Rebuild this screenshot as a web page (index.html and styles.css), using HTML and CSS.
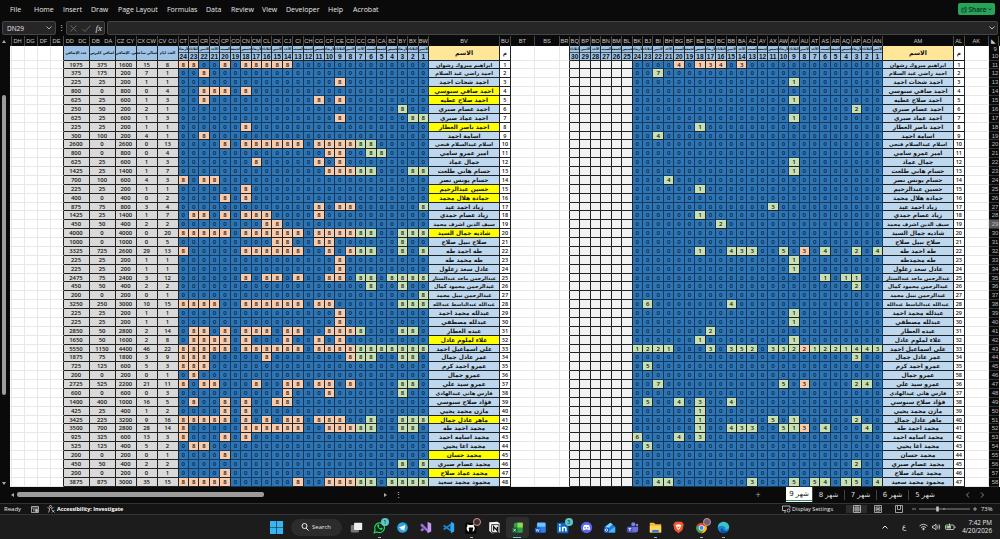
FILE: index.html
```html
<!DOCTYPE html>
<html lang="en">
  <head>
    <meta charset="UTF-8" />
    <meta name="viewport" content="width=device-width, initial-scale=1.0" />
    <title>Attendance</title>
    <link rel="stylesheet" href="styles.css">
  </head>
  <body>
    <div class="menu">
      <span>File</span><span>Home</span><span>Insert</span><span>Draw</span><span>Page Layout</span><span>Formulas</span><span>Data</span><span>Review</span><span>View</span><span>Developer</span><span>Help</span><span>Acrobat</span>
      <button class="share">
        <svg width="6" height="7" viewBox="0 0 14 14" fill="none" stroke="#0b2c18" stroke-width="1.5"><path d="M6 4H2v9h10V9M5 9c0-4 2-5 5-5V1l4 4-4 4V6"/></svg>
        Share
        <svg width="4" height="3" viewBox="0 0 8 6" fill="none" stroke="#0b2c18" stroke-width="1.5"><path d="M1 1l3 3 3-3"/></svg>
      </button>
    </div>

    <div class="formula">
      <div class="namebox">DN29
        <svg width="6" height="4" viewBox="0 0 12 8" fill="none" stroke="#aaa" stroke-width="2"><path d="M1 1l5 5 5-5"/></svg>
      </div>
      <span class="dots">⋮</span>
      <div class="actions">
        <svg width="7" height="7" viewBox="0 0 14 14" stroke="#777" stroke-width="1.6"><path d="M1 1l12 12M13 1L1 13"/></svg>
        <svg width="9" height="7" viewBox="0 0 18 14" fill="none" stroke="#777" stroke-width="1.6"><path d="M1 8l5 5L17 1"/></svg>
        <i>fx</i>
      </div>
      <div class="input">
        <svg width="6" height="4" viewBox="0 0 12 8" fill="none" stroke="#bbb" stroke-width="2"><path d="M1 1l5 5 5-5"/></svg>
      </div>
    </div>

    <div class="main">
      <div class="vscroll"><span class="up"></span><span class="vthumb"></span><span class="down"></span></div>
      <div class="sheet" id="sheet"></div>
    </div>

    <div class="tabs">
      <span class="left"></span><div class="hthumb"></div><span class="right"></span><span class="dots">⋮</span>
      <span class="plus">+</span>
      <div class="tab active" dir="rtl">شهر 9</div>
      <div class="tab" dir="rtl">شهر 8</div>
      <div class="tab" dir="rtl">شهر 7</div>
      <div class="tab" dir="rtl">شهر 6</div>
      <div class="tab last" dir="rtl">شهر 5</div>
      <svg class="arrows" width="20" height="6" viewBox="0 0 20 6" fill="none" stroke="#888"><path d="M4 .5L1.500 3 4 5.500M16 .5L18.500 3 16 5.500"/></svg>
    </div>

    <div class="status">
      <span class="ready">Ready</span>
      <svg width="8" height="7" viewBox="0 0 16 14" fill="none" stroke="#ccc" stroke-width="1.5"><path d="M1 1h14v12H1zM1 4h14M4 7h3M4 10h3"/><circle cx="11" cy="9" r="2.500" fill="#ccc"/></svg>
      <svg class="access" width="8" height="8" viewBox="0 0 16 16" fill="none" stroke="#ddd" stroke-width="1.5"><circle cx="7" cy="3" r="2"/><path d="M1 5l4 2v3l-2 5M13 5L9 7v2M10 10l5 5M15 10l-5 5"/></svg>
      <b>Accessibility: Investigate</b>
      <svg class="display" width="9" height="8" viewBox="0 0 18 16" fill="none" stroke="#ddd" stroke-width="1.500"><path d="M8 11H1V2h15v5M4 14h4"/><circle cx="13" cy="11" r="3"/></svg>
      <span class="settings">Display Settings</span>
      <span class="view on"><svg width="8" height="8" viewBox="0 0 16 16" fill="none" stroke="#ccc" stroke-width="1.500"><path d="M1 1h14v14H1zM1 6h14M1 10h14M6 1v14M10 1v14"/></svg></span>
      <span class="view"><svg width="8" height="8" viewBox="0 0 16 16" fill="none" stroke="#ccc" stroke-width="1.500"><path d="M1 1h14v14H1zM4 4h8v8H4zM5 7h6M5 9h6"/></svg></span>
      <span class="view"><svg width="8" height="8" viewBox="0 0 16 16" fill="none" stroke="#ccc" stroke-width="1.500"><path d="M1 1h14v14H1zM5 1v8h6V1"/></svg></span>
      <svg class="zoombar" width="66" height="8" viewBox="0 0 66 8" stroke="#bbb" fill="none"><path d="M1 4h4M8 4h51" stroke-width=".7"/><path d="M62 4h4M64 2v4M33 3v2" stroke-width=".8"/><path d="M26.500 1.500v5" stroke="#ccc" stroke-width="2.500"/></svg>
      <span class="pct">73%</span>
    </div>

    <div class="taskbar">
      <svg class="start" width="13" height="13" viewBox="0 0 13 13" fill="#35b5f2"><path d="M0 0h6.200v6.200H0zM6.800 0H13v6.200H6.800zM0 6.800h6.200V13H0zM6.800 6.800H13V13H6.800z"/></svg>
      <div class="search"><svg width="8" height="8" viewBox="0 0 16 16" fill="none" stroke="#eee" stroke-width="2"><circle cx="7" cy="6" r="5"/><path d="M10 10l5 5"/></svg>Search</div>
      <div class="app"><svg viewBox="0 0 16 16"><rect x="1" y="5" width="10" height="9" rx="1" fill="#777"/><rect x="5" y="2" width="10" height="9" rx="1" fill="#eee"/></svg></div>
      <div class="app run"><svg viewBox="0 0 16 16"><path d="M1.500 14.500l1-4a6 6 0 1 1 2.500 3z" fill="#0c2416" stroke="#25d366" stroke-width="1.500"/><path d="M5 5c0 3 3 6 6 6l1-2-2-1-1 1C8 8.500 7.500 8 7 7l1-1-1-2z" fill="#25d366"/></svg><em>1</em></div>
      <div class="app"><svg viewBox="0 0 16 16"><circle cx="8" cy="8" r="6.500" fill="#2ba4e0"/><path d="M3.500 8l8-3-1.500 7-2.500-2-1.500 1-.3-2z" fill="#fff"/></svg></div>
      <div class="app"><svg viewBox="0 0 16 16"><path d="M2 4l2-1 7 7.500V14L2 6zM2 12l2 1 3-3-2-2-3 2.500z" fill="#9a6bd8"/><path d="M10.500 1L15 3v10l-4.500 2z" fill="#c39af2"/></svg></div>
      <div class="app"><svg viewBox="0 0 16 16"><path d="M2 5.500L11 12V4L2 10.500" fill="none" stroke="#1a86d0" stroke-width="2"/><path d="M11 1l4 2v10l-4 2z" fill="#2fa8f3"/></svg></div>
      <div class="app run"><svg viewBox="0 0 16 16"><rect x="0" y="2" width="14" height="14" rx="2" fill="#050505"/><path d="M4.500 13.500a5.200 5.200 0 0 1-2.500-5q0-1.500 1-2.500V4l2 1h4l2-1v2q1 1 1 2.500a5.200 5.200 0 0 1-2.500 5v-3q1-1 .5-2.500H5q-1 1.500 0 2.500z" fill="#fff"/></svg><em class="pink"></em></div>
      <div class="app"><svg viewBox="0 0 16 16"><path d="M1.500 1.500l10-.5 3 2v11.500l-10 .5-3-3z" fill="#f4f4f4"/><path d="M4.500 4.500h9v9.500h-9z" fill="#fff" stroke="#111"/><path d="M7 12V7l4.500 5V7" fill="none" stroke="#111" stroke-width="1.600"/></svg></div>
      <div class="app sel"><svg viewBox="0 0 16 16"><rect x="3.500" y="2" width="11" height="12.500" rx="2" fill="#2f9d44"/><path d="M8 2h6.500v6H8z" fill="#8ddb52"/><rect x="1" y="8" width="7" height="6.500" rx="1.500" fill="#0f5c30"/><path d="M3 9.500l3 3.500M6 9.500L3 13" stroke="#dfd"/></svg></div>
      <div class="app"><svg viewBox="0 0 16 16"><rect x="3.500" y="2" width="11" height="12.500" rx="2" fill="#2f7fe8"/><path d="M4 2h10v5H4z" fill="#6fc4ff"/><rect x="1" y="8" width="7" height="6.500" rx="1.500" fill="#1550bd"/><path d="M2.500 9.500l1 3.500 1-3 1 3 1-3.500" stroke="#def" stroke-width=".8" fill="none"/></svg></div>
      <div class="app"><svg viewBox="0 0 16 16"><rect x="0" y="2" width="14" height="13" rx="1" fill="#0a66c2"/><path d="M3.500 7v6M7 13V7M7 10c0-3 4-3 4 0v3" stroke="#fff" stroke-width="1.900" fill="none"/><circle cx="3.500" cy="4.800" r="1.100" fill="#fff"/></svg><em>3</em></div>
      <div class="app"><svg viewBox="0 0 16 16"><circle cx="8" cy="8" r="7" fill="#5865f2"/><path d="M5 5q3-1 6 0 2 3 1.500 5.500L10.500 11.500 10 10.500H6l-.5 1-2-1Q3 8 5 5z" fill="#fff"/><circle cx="6.300" cy="8.300" r="1" fill="#5865f2"/><circle cx="9.700" cy="8.300" r="1" fill="#5865f2"/></svg></div>
      <div class="app"><svg viewBox="0 0 16 16"><path d="M2 7l7-5 6 5v7H2z" fill="#1b7fe0"/><path d="M3 7l6-5 3 2-7 6z" fill="#7fd3ff"/><path d="M15 7v7H5z" fill="#49b3f7"/><rect x="1" y="8" width="6.500" height="6.500" rx="1.500" fill="#1453b8"/><circle cx="4.200" cy="11.200" r="1.500" fill="none" stroke="#fff"/></svg></div>
      <div class="app"><svg viewBox="0 0 16 16"><circle cx="9" cy="4" r="2.500" fill="#7b83eb"/><circle cx="13.500" cy="5" r="1.500" fill="#7b83eb"/><path d="M5 7h10v4q0 3-3 3H5z" fill="#6b6fe0"/><rect x="1" y="7" width="7" height="7" rx="1.500" fill="#4b4fc4"/><path d="M3 9h3.500M4.700 9v3.500" stroke="#fff" stroke-width="1.100"/></svg></div>
      <div class="app run"><svg viewBox="0 0 16 16"><path d="M1 2h5l2 2h7v10H1z" fill="#f7b92f"/><path d="M1 6h14v8H1z" fill="#ffd45c"/><path d="M4 11h8v3H4z" fill="#2a80d8"/></svg></div>
      <div class="app"><svg viewBox="0 0 16 16"><path d="M4 1h8l2.500 3-1.500 7-5 4-5-4L1.500 4z" fill="#f4542c"/><path d="M4.500 5L8 4l3.500 1-1.500 4 -2 2.500L6 9z" fill="#fff"/><path d="M6 6.500l2 1 2-1-2 3z" fill="#f4542c"/></svg></div>
      <div class="app run"><svg viewBox="0 0 16 16"><circle cx="8" cy="8.500" r="6.500" fill="#e94335"/><path d="M2.400 5.200A6.500 6.500 0 0 0 8 15l3-5z" fill="#34a853"/><path d="M8 15a6.500 6.500 0 0 0 6-9H8l3 4z" fill="#fbbc05"/><circle cx="8" cy="8.500" r="3" fill="#4285f4" stroke="#fff"/></svg><em class="grey"></em></div>
      <div class="app run"><svg viewBox="0 0 16 16"><circle cx="8" cy="8" r="7" fill="#1683d8"/><path d="M1 8a7 7 0 0 1 14 0q-1 3-5 2.500 1-4-3-4.500-4-.5-6 2z" fill="#3fc3c0"/><path d="M6.500 8.500q0 4 7 4-2 2.500-5 2.500-5-1-4-5z" fill="#0c4fa3"/></svg></div>
      <div class="tray">
        <svg width="6" height="4" viewBox="0 0 12 8" fill="none" stroke="#eee" stroke-width="2"><path d="M1 7l5-5 5 5"/></svg>
        <span class="lang">ع</span>
        <svg width="9" height="8" viewBox="0 0 18 16" fill="none" stroke="#eee" stroke-width="1.600"><path d="M1 6q8-7 16 0M4 9q5-4 10 0"/><circle cx="9" cy="12" r="1.500" fill="#eee"/></svg>
        <svg width="9" height="8" viewBox="0 0 18 16" fill="none" stroke="#eee" stroke-width="1.500"><path d="M1 6h3l4-4v12l-4-4H1zM11 5q2 3 0 6M14 3q3 5 0 10"/></svg>
        <svg width="11" height="8" viewBox="0 0 22 16" fill="none" stroke="#eee" stroke-width="1.500"><rect x="1" y="4" width="17" height="9" rx="2"/><path d="M20 7v3"/><path d="M3 6h9v5H3z" fill="#8bd48b" stroke="none"/><path d="M9 1v6"/></svg>
        <div class="clock">7:42 PM<br>4/20/2026</div>
      </div>
    </div>

    <script src="script.js"></script>
  </body>
</html>
```
FILE: styles.css
```css
* {
  box-sizing: border-box;
}
body {
  margin: 0;
  width: 1000px;
  height: 539px;
  overflow: hidden;
  background: #0a0a0a;
  color: #e8e8e8;
  font-family: "Open Sans", "Noto Sans", sans-serif;
  font-size: 7px;
}
.menu {
  display: grid;
  grid-template-columns: 24px 29px 28px 27px 49px 39px 25px 31px 24px 42px 25px 1fr auto;
  height: 20px;
  padding: 0 5px 2px 10px;
  align-items: center;
  white-space: nowrap;
}
.share {
  display: flex;
  align-items: center;
  justify-content: space-between;
  width: 37px;
  height: 12px;
  padding: 0 3px;
  border: 0;
  border-radius: 2px;
  background: #27a35a;
  color: #0b2c18;
  font: 600 6.5px "Open Sans", sans-serif;
}

/* formula bar */
.formula {
  display: flex;
  height: 16px;
  padding: 1px 2px 1px;
}
.namebox,
.actions,
.input {
  display: flex;
  align-items: center;
  height: 14px;
  background: #262626;
  border: 1px solid #454545;
  border-radius: 2px;
}
.namebox {
  width: 54px;
  padding: 0 3px 0 4px;
  justify-content: space-between;
  font-size: 6.5px;
}
.formula .dots {
  width: 10px;
  text-align: center;
  line-height: 13px;
}
.actions {
  width: 39px;
  padding: 0 2px 0 3px;
  justify-content: space-between;
}
.actions i {
  font: italic 9px "Liberation Serif", serif;
  color: #ddd;
}
.input {
  flex: 1;
  margin-left: 2px;
  padding-right: 2px;
  justify-content: flex-end;
}

/* grid */
.main {
  display: flex;
  height: 450.5px;
}
.vscroll {
  display: flex;
  flex-direction: column;
  align-items: center;
  width: 10px;
  padding: 4px 2px 2px 0;
}
.up,
.down {
  border: 2px solid transparent;
  border-top: 0;
  border-bottom: 3px solid #aaa;
}
.down {
  border-top: 3px solid #aaa;
  border-bottom: 0;
  margin-top: auto;
}
.vthumb {
  width: 4px;
  height: 300px;
  margin-top: 52px;
  border-radius: 2px;
  background: #9c9c9c;
}
.sheet {
  width: 990px;
}
.row {
  display: grid;
  grid-template-columns: 1.5px repeat(4, 13px) 26px 26px 21px 21px 21px repeat(24, 10.45px) 71.2px 10.5px 24.5px 24.5px 10.3px repeat(30, 10.45px) 70.7px 11px 24px 10.5px;
  height: 8.875px;
  line-height: 8.4px;
  background: #fff;
  color: #111;
  text-align: center;
  white-space: nowrap;
}
.row > div {
  border-right: 1px solid #222;
  border-bottom: 1px solid #222;
  overflow: hidden;
}
.row > .blank {
  border-color: #e8e8e8;
}
.row > .edge {
  border-right-color: #222;
}
.row.letters {
  height: 9.5px;
  background: #0a0a0a;
  color: #c8c8c8;
  font: 5.7px/10px "Liberation Sans", sans-serif;
}
.row.letters > div {
  display: flex;
  justify-content: space-around;
  border-bottom: 0;
  border-right: 1px solid #484848;
}
.row.head {
  height: 15px;
}
.row.head .money,
.row.head .day {
  background: #9dc3e6;
}
.row.head .money {
  font: bold 3.8px/14px "DejaVu Sans Condensed", "DejaVu Sans", sans-serif;
}
.row.head .day b {
  display: block;
  height: 7.5px;
  font: bold 6.6px/8px "Liberation Sans", sans-serif;
}
.row.head .day b:first-child {
  border-bottom: 1px solid #456;
  font: bold 3.5px/6.5px "DejaVu Sans Condensed", "DejaVu Sans", sans-serif;
}
.row.head .name {
  background: #ffe699;
  font-size: 6.3px;
  line-height: 14px;
}
.row.head .idx {
  line-height: 14px;
}
.money {
  background: #d9d9d9;
  font-weight: 600;
  font-size: 5.9px;
}
.day {
  background: #2e75b6;
  font-size: 6.1px;
  font-weight: 600;
}
.row > .day.zero {
  color: #0b2543;
  border-color: #143a60;
}
.day.over {
  background: #f8cbad;
}
.day.ok {
  background: #c6e0b4;
}
.day.off {
  background: #f2f2f2;
}
.name {
  background: #bdd7ee;
  font: bold 5.9px/8px "DejaVu Sans", sans-serif;
}
.name.mid {
  font-size: 5.2px;
}
.name.long {
  font-size: 4.9px;
}
.name.hl {
  background: #ffff00;
}
.idx {
  font-weight: 600;
  font-size: 5.5px;
}
.row > .num {
  background: #0a0a0a;
  color: #bbb;
  border-color: #333;
  border-right: 0;
  padding-left: 2px;
  font: 6px/8px "Liberation Sans", sans-serif;
}
.row.head .num {
  line-height: 7.5px;
}
.row > .num.cur {
  background: #5a5a5a;
}

/* sheet tabs */
.tabs {
  display: flex;
  align-items: center;
  height: 16.5px;
  padding-left: 11px;
}
.left,
.right {
  border: 2px solid transparent;
  border-left: 0;
  border-right: 3px solid #aaa;
}
.right {
  border-left: 3px solid #aaa;
  border-right: 0;
  margin-left: 120px;
}
.hthumb {
  width: 247px;
  height: 5px;
  margin-left: 3px;
  border-radius: 2px;
  background: #9c9c9c;
}
.tabs .dots {
  width: 12px;
  margin-left: 5px;
  text-align: center;
}
.plus {
  width: 10px;
  margin: 0 23px 0 349px;
  text-align: center;
  font-size: 9px;
  color: #aaa;
}
.tab {
  width: 32px;
  border-right: 1px solid #444;
  text-align: center;
  color: #ddd;
  font: 7px/10px "DejaVu Sans", sans-serif;
}
.tab.active {
  width: 27px;
  height: 15px;
  align-self: flex-start;
  padding-top: 2px;
  background: #fff;
  color: #222;
  box-shadow: inset 0 -1px #fff, inset 0 -2px #2c8f5c;
}
.tab.last {
  border: 0;
}
.arrows {
  margin-left: 24px;
}

.status {
  display: flex;
  align-items: center;
  height: 12px;
  padding-left: 4px;
  border-top: 1px solid #333;
  border-bottom: 1px solid #333;
  background: #141414;
  font-size: 6px;
}
.ready {
  width: 27px;
}
.access {
  margin: 0 2px 0 8px;
}
.status b {
  width: 725px;
  color: #fff;
  font-size: 5.4px;
}
.settings {
  width: 54px;
  margin-left: 1px;
  white-space: nowrap;
  font-size: 5.6px;
}
.view {
  display: flex;
  justify-content: center;
  width: 21px;
}
.view.on {
  background: #2c2c2c;
}
.zoombar {
  margin-left: 2px;
}
.pct {
  margin-left: 4px;
  font-size: 5.8px;
}

.taskbar {
  display: flex;
  align-items: center;
  height: 24px;
  padding-left: 270px;
  background: #1c1c1c;
}
.search {
  display: flex;
  align-items: center;
  gap: 3px;
  width: 51px;
  height: 17px;
  margin: 0 3px 0 8px;
  padding-left: 10px;
  border-radius: 9px;
  background: #2c2c2c;
  font-size: 6px;
}
.app {
  position: relative;
  display: flex;
  align-items: center;
  justify-content: center;
  width: 22.97px;
  height: 21px;
}
.app svg {
  width: 13px;
  height: 13px;
}
.app.sel {
  background: #2d2d2d;
  border-radius: 3px;
}
.app.run::after,
.app.sel::after {
  content: "";
  position: absolute;
  bottom: 0;
  width: 3px;
  height: 1px;
  background: #aaa;
}
.app.sel::after {
  width: 8px;
  background: #62cdd6;
}
.app em {
  position: absolute;
  top: 1px;
  right: 2px;
  width: 8px;
  height: 8px;
  border-radius: 50%;
  background: #5fc9c9;
  color: #123;
  font: 6px/8px "Open Sans", sans-serif;
  text-align: center;
}
.app em.pink {
  background: #333;
  border: 1px solid #e88;
}
.app em.grey {
  background: #745b66;
  border: 1px solid #b99;
}
.tray {
  display: flex;
  align-items: center;
  gap: 4px;
  margin-left: auto;
  padding-right: 8px;
}
.lang {
  width: 10px;
  margin: 0 6px 0 7px;
  text-align: center;
  font: 7px "DejaVu Sans", sans-serif;
}
.clock {
  width: 32px;
  text-align: right;
  font-size: 6.3px;
  line-height: 8.5px;
}
```
FILE: script.js
```js
var week = ["الأحد", "الاثنين", "الثلاثاء", "الأربعاء", "الخميس", "الجمعة", "السبت"];
var moneyHead = ["عدد الإضافي", "اضافي كليرس", "س. الإضافي", "اجمالي ساعة", "العدد ايام"];

// name | worked columns (0 = day 24) | late hours as column:hours, "!" = over | highlight | name in the second table
var people = [
  ["ابراهيم مبروك رشوان", [0, 1, 4, 6, 7, 8, 9, 10], "4:4! 6:1! 7:3! 8:4! 10:3!"],
  ["احمد راضي عبد السلام", [2], "2:7"],
  ["احمد شحات احمد", [15], "15:1"],
  ["احمد صافي سنوسي", [2, 3, 4, 6], "", 1],
  ["احمد صلاح عطيه", [2, 13, 15], "15:1", 1],
  ["احمد عصام صبري", [21], "21:2"],
  ["احمد عماد صبري", [15, 22, 23], "15:1"],
  ["احمد ناصر العطار", [6], "6:1", 1],
  ["اسامة احمد", [2], "2:4"],
  ["اسلام عبدالسلام فتحي", [4, 6, 7, 8, 9, 10, 11, 13, 14, 15, 16, 17, 18], ""],
  ["امير عمرو سامي", [14, 15, 18, 19], ""],
  ["جمال عماد", [7, 13, 15], "15:1"],
  ["حسام هاني طلعت", [14, 15, 16, 17, 18, 22, 23], "15:1"],
  ["حسام يونس نصر", [0, 2, 3], "3:4"],
  ["حسين عبدالرحيم", [6], "6:1", 1],
  ["حمادة هلال محمد", [4, 6], "", 1],
  ["زياد احمد عيد", [13, 15, 16, 23], "13:3"],
  ["زياد عصام حمدي", [1, 2, 4, 6, 7, 8, 13], "6:1"],
  ["سيف الدين اشرف محمد", [8, 9], "8:2"],
  ["شاديه جمال السيد", [0, 1, 2, 3, 4, 6, 7, 8, 9, 10, 11, 13, 14, 15, 16, 17, 18, 21, 22, 23], "", 1],
  ["صلاح نبيل صلاح", [9, 10, 13, 14, 21], ""],
  ["طه احمد طه", [0, 6, 7, 8, 9, 10, 11, 14, 16, 17, 18, 21, 23], "6:1 9:4 10:3 11:3 14:5 16:3! 18:4 21:2 23:4"],
  ["طه محمد طه", [15], "15:1", 0, "طه محمدطه"],
  ["عادل سعد زغلول", [15], "15:1"],
  ["عبدالرحمن ماجد عبدالستار", [6, 8, 9, 11, 14, 15, 17, 18, 20, 21, 22, 23], "18:1 20:1 21:1"],
  ["عبدالرحمن محمود كمال", [18, 21], "21:2"],
  ["عبدالرحمن نبيل محمد", [23], ""],
  ["عبدالله عبدالباسط عبدالله", [0, 1, 2, 3, 6, 7, 8, 9, 10, 11, 13, 14, 21, 22, 23], "1:6 9:4"],
  ["عبدلله محمد احمد", [15], "15:1"],
  ["عبدلله مصطفي", [15], "15:1"],
  ["عبده العطار", [1, 2, 4, 6, 7, 8, 10, 11, 14, 15, 16, 17, 21, 22], "7:2"],
  ["علاء لملوم عادل", [1, 2, 3, 4, 6, 10, 13, 15], "6:1 15:1", 1],
  ["علي اسماعيل احمد", [0, 1, 2, 3, 4, 6, 7, 8, 9, 10, 11, 13, 14, 15, 16, 17, 18, 19, 20, 21, 22, 23], "0:1 1:2 2:2 3:1 7:3 9:3 10:5 11:2 13:3 14:3 15:2 16:2! 17:1 18:2 19:2 20:1 21:4 22:4 23:3"],
  ["عمر عادل جمال", [0, 1, 2, 8, 16, 17, 18, 21, 22], "21:3"],
  ["عمرو احمد كرم", [0, 1, 2], "1:5"],
  ["عمرو جمال", [1], ""],
  ["عمرو سيد علي", [0, 2, 3, 7, 10, 11, 13, 14, 16, 21, 22], "2:7 14:5 16:3! 21:2 22:4"],
  ["فارس هاني عبدالهادي", [10, 14, 21], ""],
  ["فؤاد صلاح سنوسي", [1, 4, 6, 9, 10], "1:5 4:4 6:3 9:4"],
  ["مازن محمد يحيي", [4, 6], "6:1"],
  ["ماهر عادل جمال", [0, 1, 2, 3, 4, 6, 8, 10, 11, 13, 14, 15, 18, 21, 22, 23], "6:1 13:5 15:1 21:2", 1],
  ["محمد احمد طه", [0, 6, 7, 8, 9, 10, 11, 14, 15, 16, 17, 18, 21, 22], "6:1 9:4 10:3 11:3 14:5 15:1 16:3! 18:4 22:4"],
  ["محمد اسامه احمد", [0, 4, 6], "0:6 4:4 6:3"],
  ["محمد اغا يحيي", [1, 2], "1:5"],
  ["محمد حسان", [4], "", 1],
  ["محمد عصام صبري", [21, 23], "21:2"],
  ["محمد عماد صلاح", [4], "", 1],
  ["محمود محمد سعيد", [0, 1, 2, 3, 4, 11, 14, 15, 16, 17, 18, 20, 21, 22, 23], "2:4 3:4 11:3 15:5 17:5 18:4 20:1 21:5 23:4"]
];

function cell(cls, text) {
  return '<div class="' + cls + '">' + text + "</div>";
}

function blanks(n) {
  var html = "";
  for (var i = 1; i < n; i++) html += cell("blank", "");
  return html + cell("blank edge", "");
}

// 1 -> A, 27 -> AA
function letters(n) {
  var s = "";
  while (n > 0) {
    s = String.fromCharCode(65 + ((n - 1) % 26)) + s;
    n = Math.floor((n - 1) / 26);
  }
  return s;
}

function letterRow() {
  var html = cell("", "");
  var n = 112; // DH
  for (var i = 0; i < 4; i++) html += cell("", letters(n--));
  for (i = 0; i < 5; i++) {
    html += cell("", "<span>" + letters(n--) + "</span><span>" + letters(n--) + "</span>");
  }
  while (n >= 37) html += cell("", letters(n--));
  return '<div class="row letters">' + html + cell("", "◣") + "</div>";
}

function dayHead(d) {
  return cell("day", "<b>" + week[d % 7] + "</b><b>" + d + "</b>");
}

function headRow() {
  var html = blanks(5);
  for (var i = 0; i < 5; i++) html += cell("money", moneyHead[i]);
  for (i = 24; i > 0; i--) html += dayHead(i);
  html += cell("name", "الاسم") + cell("idx", "م") + blanks(3);
  for (i = 30; i > 0; i--) html += dayHead(i);
  html += cell("name", "الاسم") + cell("idx", "م") + cell("blank", "") + cell("num", "9<br>10");
  return '<div class="row head">' + html + "</div>";
}

function personRow(p, r) {
  var late = {};
  var hours = 0;
  p[2].split(" ").forEach(function (s) {
    if (!s) return;
    var a = s.split(":");
    late[a[0]] = a[1];
    hours += parseInt(a[1]);
  });
  var count = p[1].length;
  var size = p[0].length > 23 ? " long" : p[0].length > 18 ? " mid" : "";
  var html = blanks(5);
  [count * 200 + hours * 25, hours * 25, count * 200, hours, count].forEach(function (v) {
    html += cell("money", v);
  });
  for (var i = 0; i < 24; i++) {
    if (p[1].indexOf(i) < 0) html += cell("day zero", 0);
    else html += cell(i < 17 ? "day over" : "day ok", 8);
  }
  html += cell((p[3] ? "name hl" : "name") + size, p[0]) + cell("idx", r + 1) + blanks(3);
  for (i = 0; i < 6; i++) html += cell("day off", "");
  for (i = 0; i < 24; i++) {
    if (!late[i]) html += cell("day zero", 0);
    else html += cell(late[i].indexOf("!") > 0 ? "day over" : "day ok", parseInt(late[i]));
  }
  // number 58 was inserted between 35 and 36
  var id = r < 35 ? r + 1 : r == 35 ? 58 : r;
  html += cell("name" + size, p[4] || p[0]) + cell("idx", id) + cell("blank", "");
  html += cell(r == 18 ? "num cur" : "num", r + 11);
  return '<div class="row">' + html + "</div>";
}

document.getElementById("sheet").innerHTML = letterRow() + headRow() + people.map(personRow).join("");
```
